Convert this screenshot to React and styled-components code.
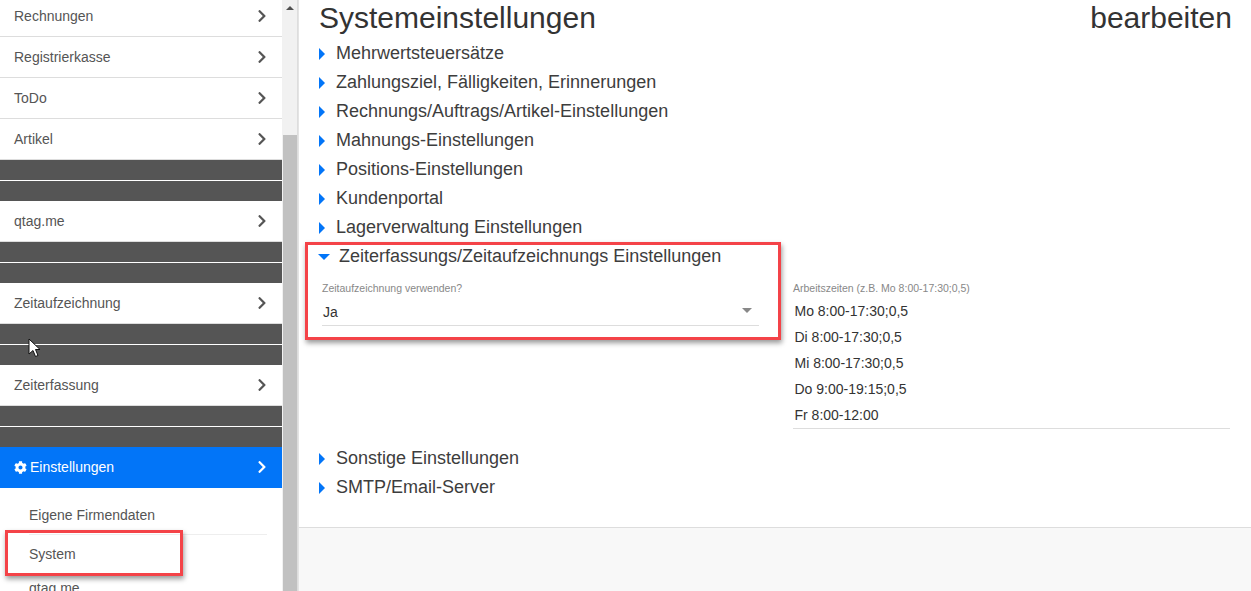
import React from 'react'
import styled, { createGlobalStyle } from 'styled-components'
import { FaChevronRight, FaCog } from 'react-icons/fa'

const GlobalStyle = createGlobalStyle`
html, body {
  margin: 0;
  padding: 0;
  background: #fff;
}
#root {
  height: 591px;
  overflow: hidden;
}
* {
  box-sizing: border-box;
}
`

const Page = styled.div`
position: relative;
display: flex;
width: 1251px;
height: 591px;
overflow: hidden;
font-family: "Liberation Sans", Arial, sans-serif;
color: #333;
`

const Sidebar = styled.nav`
width: 282px;
height: 591px;
flex: none;
overflow: hidden;
`

const SideList = styled.div`
margin-top: -4px;
`

const Row = styled.div`
display: flex;
align-items: center;
justify-content: space-between;
height: 41px;
padding: 0 13px 0 14px;
font-size: 14px;
color: #555;
background: #fff;
border-bottom: 1px solid #ddd;
`

const ActiveRow = styled(Row)`
color: #fff;
background: #0275f8;
border-bottom-color: #0275f8;
`

const RowLabel = styled.span`
display: flex;
align-items: center;
gap: 3px;
`

const DarkRow = styled.div`
height: 20px;
background: #555;
& + & {
  margin-top: 1px;
}
`

const Chevron = styled(FaChevronRight)`
font-size: 14px;
color: ${props => (props.$light ? '#fff' : '#555')};
`

const SubList = styled.div`
padding: 8px 15px 0 29px;
`

const SubItem = styled.div`
height: ${props => (props.$plain ? 34 : 39)}px;
line-height: 39px;
font-size: 14px;
color: #555;
border-bottom: 1px solid ${props => (props.$plain ? 'transparent' : '#eee')};
`

const Scrollbar = styled.div`
width: 16px;
height: 591px;
flex: none;
display: flex;
flex-direction: column;
align-items: center;
padding-left: 1px;
background: #f1f1f1;
border-right: 1px solid #ddd;
`

const ScrollUp = styled.div`
width: 0;
height: 0;
margin-top: 6px;
border-left: 4px solid transparent;
border-right: 4px solid transparent;
border-bottom: 4px solid #505050;
`

const ScrollThumb = styled.div`
width: 14px;
flex: 1;
margin-top: 125px;
background: #c1c1c1;
`

const Main = styled.main`
flex: 1;
min-width: 0;
height: 591px;
display: flex;
flex-direction: column;
border-left: 1px solid #e4e4e4;
`

const Content = styled.div`
height: 528px;
flex: none;
padding: 0 19px 0 20px;
border-bottom: 1px solid #ddd;
`

const Header = styled.div`
display: flex;
align-items: flex-start;
justify-content: space-between;
height: 39px;
`

const Title = styled.h1`
margin: 0;
font-size: 30px;
font-weight: 400;
line-height: 36px;
color: #333;
`

const EditLabel = styled.span`
font-size: 30px;
line-height: 36px;
color: #333;
`

const Section = styled.div`
display: flex;
align-items: center;
height: 29px;
font-size: 18px;
color: #3d3d3d;
`

const ClosedArrow = styled.span`
width: 0;
height: 0;
margin-right: 11px;
border-top: 6px solid transparent;
border-bottom: 6px solid transparent;
border-left: 6px solid #0275f8;
`

const OpenArrow = styled.span`
width: 0;
height: 0;
margin: 0 9px 0 -1px;
border-left: 6px solid transparent;
border-right: 6px solid transparent;
border-top: 6px solid #0275f8;
`

const FieldGrid = styled.div`
display: grid;
grid-template-columns: 437px 437px;
column-gap: 34px;
padding: 0 0 15px 3px;
`

const Field = styled.div`
padding-top: 10px;
`

const FieldLabel = styled.div`
height: 14px;
line-height: 14px;
font-size: 10.5px;
color: #888;
`

const SelectBox = styled.div`
display: flex;
align-items: center;
justify-content: space-between;
height: 28px;
margin-top: 3px;
padding: 0 7px 0 1px;
font-size: 14px;
color: #333;
border-bottom: 1px solid #ddd;
`

const Caret = styled.span`
width: 0;
height: 0;
margin-bottom: 3px;
border-left: 5px solid transparent;
border-right: 5px solid transparent;
border-top: 5px solid #888;
`

const TextArea = styled.div`
margin-top: 3px;
padding: 0 1px 0 1.5px;
font-size: 14px;
line-height: 26px;
color: #333;
border-bottom: 1px solid #ddd;
`

const Footer = styled.div`
flex: 1;
background: #f8f8f8;
`

const Highlight = styled.div`
position: absolute;
left: ${props => props.$x}px;
top: ${props => props.$y}px;
width: ${props => props.$w}px;
height: ${props => props.$h}px;
border: 3px solid #f44348;
box-shadow: 1px 3px 5px rgba(0, 0, 0, 0.4);
pointer-events: none;
`

const Cursor = styled.svg`
position: absolute;
left: 28px;
top: 338px;
width: 13px;
height: 20px;
`

const topRows = ['Rechnungen', 'Registrierkasse', 'ToDo', 'Artikel']
const sections = [
  'Mehrwertsteuersätze',
  'Zahlungsziel, Fälligkeiten, Erinnerungen',
  'Rechnungs/Auftrags/Artikel-Einstellungen',
  'Mahnungs-Einstellungen',
  'Positions-Einstellungen',
  'Kundenportal',
  'Lagerverwaltung Einstellungen',
]
const hours = [
  'Mo 8:00-17:30;0,5',
  'Di 8:00-17:30;0,5',
  'Mi 8:00-17:30;0,5',
  'Do 9:00-19:15;0,5',
  'Fr 8:00-12:00',
]

function MenuRow({ label }) {
  return (
    <Row>
      <RowLabel>{label}</RowLabel>
      <Chevron />
    </Row>
  )
}

function DarkPair() {
  return (
    <>
      <DarkRow />
      <DarkRow />
    </>
  )
}

export default function App() {
  return (
    <Page>
      <GlobalStyle />
      <Sidebar>
        <SideList>
          {topRows.map(label => <MenuRow key={label} label={label} />)}
          <DarkPair />
          <MenuRow label="qtag.me" />
          <DarkPair />
          <MenuRow label="Zeitaufzeichnung" />
          <DarkPair />
          <MenuRow label="Zeiterfassung" />
          <DarkPair />
          <ActiveRow>
            <RowLabel><FaCog size={13} /> Einstellungen</RowLabel>
            <Chevron $light />
          </ActiveRow>
          <SubList>
            <SubItem>Eigene Firmendaten</SubItem>
            <SubItem $plain>System</SubItem>
            <SubItem $plain>qtag.me</SubItem>
          </SubList>
        </SideList>
      </Sidebar>
      <Scrollbar>
        <ScrollUp />
        <ScrollThumb />
      </Scrollbar>
      <Main>
        <Content>
          <Header>
            <Title>Systemeinstellungen</Title>
            <EditLabel>bearbeiten</EditLabel>
          </Header>
          {sections.map(label => (
            <Section key={label}><ClosedArrow />{label}</Section>
          ))}
          <Section><OpenArrow />Zeiterfassungs/Zeitaufzeichnungs Einstellungen</Section>
          <FieldGrid>
            <Field>
              <FieldLabel>Zeitaufzeichnung verwenden?</FieldLabel>
              <SelectBox>Ja<Caret /></SelectBox>
            </Field>
            <Field>
              <FieldLabel>Arbeitszeiten (z.B. Mo 8:00-17:30;0,5)</FieldLabel>
              <TextArea>
                {hours.map(line => <div key={line}>{line}</div>)}
              </TextArea>
            </Field>
          </FieldGrid>
          <Section><ClosedArrow />Sonstige Einstellungen</Section>
          <Section><ClosedArrow />SMTP/Email-Server</Section>
        </Content>
        <Footer />
      </Main>
      <Highlight $x={305} $y={242} $w={476} $h={98} />
      <Highlight $x={5} $y={530} $w={178} $h={46} />
      <Cursor viewBox="0 0 13 20">
        <path d="M1 1v15l4-3.5 2.5 6 2.5-1-2.5-6H12z" fill="#fff" stroke="#111" strokeWidth="1" />
      </Cursor>
    </Page>
  )
}
